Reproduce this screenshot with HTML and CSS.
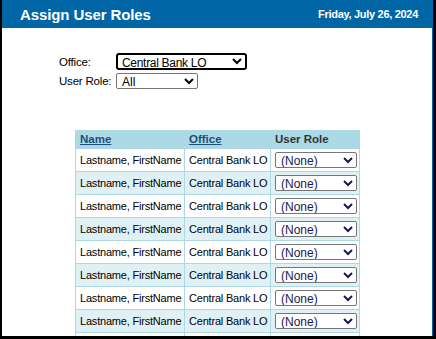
FILE: index.html
```html
<!DOCTYPE html>
<html>
<head>
<meta charset="utf-8">
<link rel="stylesheet" href="styles.css">
</head>
<body>
<div class="frame">
  <div class="header">
    <span class="title">Assign User Roles</span>
    <span class="date">Friday, July 26, 2024</span>
  </div>
  <div class="content">
    <div class="filters">
      <div class="frow"><label class="lbl">Office:</label><select class="sel office"><option>Central Bank LO</option></select></div>
      <div class="frow"><label class="lbl">User Role:</label><select class="sel role"><option>All</option></select></div>
    </div>
    <table class="grid">
      <colgroup><col class="c-name"><col class="c-office"><col class="c-role"></colgroup>
      <thead>
        <tr><th><a href="#">Name</a></th><th><a href="#">Office</a></th><th>User Role</th></tr>
      </thead>
      <tbody>
        <tr><td>Lastname, FirstName</td><td>Central Bank LO</td><td><select class="rsel"><option>(None)</option></select></td></tr>
        <tr class="alt"><td>Lastname, FirstName</td><td>Central Bank LO</td><td><select class="rsel"><option>(None)</option></select></td></tr>
        <tr><td>Lastname, FirstName</td><td>Central Bank LO</td><td><select class="rsel"><option>(None)</option></select></td></tr>
        <tr class="alt"><td>Lastname, FirstName</td><td>Central Bank LO</td><td><select class="rsel"><option>(None)</option></select></td></tr>
        <tr><td>Lastname, FirstName</td><td>Central Bank LO</td><td><select class="rsel"><option>(None)</option></select></td></tr>
        <tr class="alt"><td>Lastname, FirstName</td><td>Central Bank LO</td><td><select class="rsel"><option>(None)</option></select></td></tr>
        <tr><td>Lastname, FirstName</td><td>Central Bank LO</td><td><select class="rsel"><option>(None)</option></select></td></tr>
        <tr class="alt"><td>Lastname, FirstName</td><td>Central Bank LO</td><td><select class="rsel"><option>(None)</option></select></td></tr>
        <tr><td>Lastname, FirstName</td><td>Central Bank LO</td><td><select class="rsel"><option>(None)</option></select></td></tr>
      </tbody>
    </table>
  </div>
</div>
</body>
</html>
```
FILE: styles.css
```css
html, body {
  margin: 0;
  padding: 0;
  background: #fff;
}
body {
  font-family: "Liberation Sans", Arial, sans-serif;
  font-size: 11px;
  color: #000;
}
.frame {
  box-sizing: border-box;
  width: 436px;
  height: 339px;
  border-left: 2px solid #000;
  border-right: 3px solid #000;
  border-bottom: 3px solid #000;
  overflow: hidden;
  display: flex;
  flex-direction: column;
}
.header {
  height: 28px;
  flex: none;
  background: #0066a6;
  display: flex;
  align-items: center;
  justify-content: space-between;
  padding: 0 15px 0 18px;
}
.title {
  color: #fff;
  font-weight: bold;
  font-size: 15px;
  letter-spacing: -0.1px;
}
.date {
  color: #fff;
  font-weight: bold;
  font-size: 11px;
  letter-spacing: -0.3px;
}
.content {
  flex: 1;
  border-right: 1px solid #0066a6;
  overflow: hidden;
  padding: 25px 0 0 57px;
}
.filters {
  display: flex;
  flex-direction: column;
  gap: 3px;
}
.frow {
  display: flex;
  align-items: center;
}
.lbl {
  width: 57px;
  font-size: 11.5px;
  letter-spacing: -0.2px;
}
.sel {
  font-family: "Liberation Sans", Arial, sans-serif;
  font-size: 11px;
  height: 16px;
  padding: 0 0 0 1px;
  border: 1px solid #767676;
  border-radius: 2px;
  background: #fff;
  color: #000;
}
.office {
  width: 131px;
  height: 17px;
  border: 2px solid #000;
  border-radius: 3px;
  font-size: 12px;
  letter-spacing: -0.3px;
  padding-left: 0;
}
.role {
  width: 82px;
  height: 16px;
  font-size: 12px;
}
.grid {
  margin: 41px 0 0 16px;
  border-collapse: collapse;
  table-layout: fixed;
  width: 284px;
}
.c-name { width: 109px; }
.c-office { width: 86px; }
.c-role { width: 89px; }
.grid th {
  background: #add8e6;
  text-align: left;
  font-size: 11.5px;
  font-weight: bold;
  color: #333;
  height: 18px;
  padding: 0 4px;
  border-left: 1px solid #add8e6;
}
.grid th a {
  color: #1c4f7e;
}
.grid td {
  height: 22px;
  padding: 0 4px;
  border: 1px solid #add8e6;
  font-size: 11px;
  letter-spacing: -0.2px;
  white-space: nowrap;
  overflow: hidden;
}
.grid tr.alt td {
  background: #e0f1f6;
}
.rsel {
  font-family: "Liberation Sans", Arial, sans-serif;
  font-size: 12px;
  width: 82px;
  height: 16px;
  padding: 0 0 0 1px;
  border: 1px solid #767676;
  border-radius: 2px;
  background: #fff;
  color: #1a1a50;
}
```
